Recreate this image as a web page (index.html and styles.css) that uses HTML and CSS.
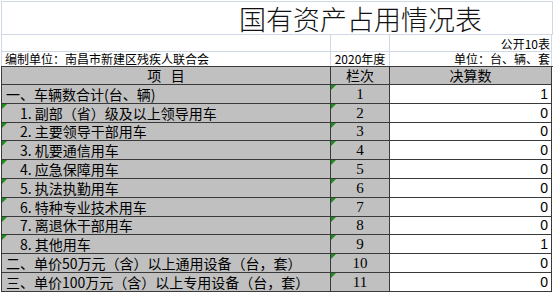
FILE: index.html
```html
<!DOCTYPE html>
<html lang="zh">
<head>
<meta charset="utf-8">
<title>国有资产占用情况表</title>
<link rel="stylesheet" href="styles.css">
</head>
<body>
<div class="sheet">
  <div class="title-row"><span class="title">国有资产占用情况表</span></div>
  <div class="meta meta-1">
    <div class="mcell"></div>
    <div class="mcell"></div>
    <div class="mcell right">公开10表</div>
  </div>
  <div class="meta meta-2">
    <div class="mcell">编制单位：南昌市新建区残疾人联合会</div>
    <div class="mcell center">2020年度</div>
    <div class="mcell right">单位：台、辆、套</div>
  </div>
  <div class="table">
    <div class="cell head">项&nbsp;&nbsp;&nbsp;目</div>
    <div class="cell head">栏次</div>
    <div class="cell head">决算数</div>

    <div class="cell name">一、车辆数合计(台、辆)</div>
    <div class="cell no mark">1</div>
    <div class="cell val">1</div>

    <div class="cell name sub mark">1. 副部（省）级及以上领导用车</div>
    <div class="cell no mark">2</div>
    <div class="cell val">0</div>

    <div class="cell name sub mark">2. 主要领导干部用车</div>
    <div class="cell no mark">3</div>
    <div class="cell val">0</div>

    <div class="cell name sub mark">3. 机要通信用车</div>
    <div class="cell no mark">4</div>
    <div class="cell val">0</div>

    <div class="cell name sub mark">4. 应急保障用车</div>
    <div class="cell no mark">5</div>
    <div class="cell val">0</div>

    <div class="cell name sub mark">5. 执法执勤用车</div>
    <div class="cell no mark">6</div>
    <div class="cell val">0</div>

    <div class="cell name sub mark">6. 特种专业技术用车</div>
    <div class="cell no mark">7</div>
    <div class="cell val">0</div>

    <div class="cell name sub mark">7. 离退休干部用车</div>
    <div class="cell no mark">8</div>
    <div class="cell val">0</div>

    <div class="cell name sub mark">8. 其他用车</div>
    <div class="cell no mark">9</div>
    <div class="cell val">1</div>

    <div class="cell name">二、单价50万元（含）以上通用设备（台，套）</div>
    <div class="cell no mark">10</div>
    <div class="cell val">0</div>

    <div class="cell name">三、单价100万元（含）以上专用设备（台，套）</div>
    <div class="cell no mark">11</div>
    <div class="cell val">0</div>
  </div>
</div>
</body>
</html>
```

FILE: styles.css
```css
html, body {
  margin: 0;
  padding: 0;
  background: #ffffff;
}

body {
  width: 553px;
  height: 292px;
  overflow: hidden;
  font-family: "Noto Sans CJK SC", "Noto Sans", sans-serif;
  color: #000;
}

.sheet {
  margin: 1px 0 0 1px;
  width: 551px;
  border-top: 1px solid #d0d7e5;
  border-left: 1px solid #d0d7e5;
}

.title-row {
  box-sizing: border-box;
  height: 33px;
  border-bottom: 1px solid #d0d7e5;
  border-right: 1px solid #d0d7e5;
  padding-left: 237px;
  display: flex;
  align-items: flex-end;
}

.title {
  font-size: 27px;
  line-height: 30px;
  font-weight: 300;
  color: #111;
}

.meta {
  display: grid;
  grid-template-columns: 329px 59px 162px;
}

.meta-1 { height: 17px; }
.meta-2 { height: 14px; }

.mcell {
  box-sizing: border-box;
  border-right: 1px solid #d0d7e5;
  font-size: 12px;
  line-height: 12px;
  white-space: nowrap;
  display: flex;
  align-items: flex-end;
  padding: 0 1px 1px 3px;
}

.meta-1 .mcell {
  border-bottom: 1px solid #d0d7e5;
}

.mcell.right { justify-content: flex-end; }
.mcell.center { justify-content: center; padding-left: 0; padding-right: 0; }

.table {
  display: grid;
  grid-template-columns: 329px 59px 162px;
  grid-template-rows: 18px;
  grid-auto-rows: 18.8px;
  border-top: 1px solid #3a3a3a;
  border-left: 1px solid #3a3a3a;
  margin-left: -1px;
}

.cell {
  position: relative;
  box-sizing: border-box;
  border-right: 1px solid #3a3a3a;
  border-bottom: 1px solid #3a3a3a;
  display: flex;
  align-items: center;
  white-space: nowrap;
  overflow: hidden;
  font-size: 14px;
  line-height: 16px;
  background: #c0c0c0;
}

.head {
  justify-content: center;
  font-size: 14px;
  line-height: 15px;
  overflow: visible;
}

.name {
  padding-left: 4px;
}

.name.sub {
  padding-left: 18px;
}

.no {
  justify-content: center;
  font-family: "Liberation Serif", "DejaVu Serif", serif;
  font-size: 15px;
}

.val {
  background: #ffffff;
  justify-content: flex-end;
  padding-right: 3px;
  font-family: "Liberation Sans", "DejaVu Sans", sans-serif;
  font-size: 14px;
}

.mark::before {
  content: "";
  position: absolute;
  left: 0;
  top: 0;
  width: 0;
  height: 0;
  border-top: 5px solid #1e8c1e;
  border-right: 5px solid transparent;
}
```
